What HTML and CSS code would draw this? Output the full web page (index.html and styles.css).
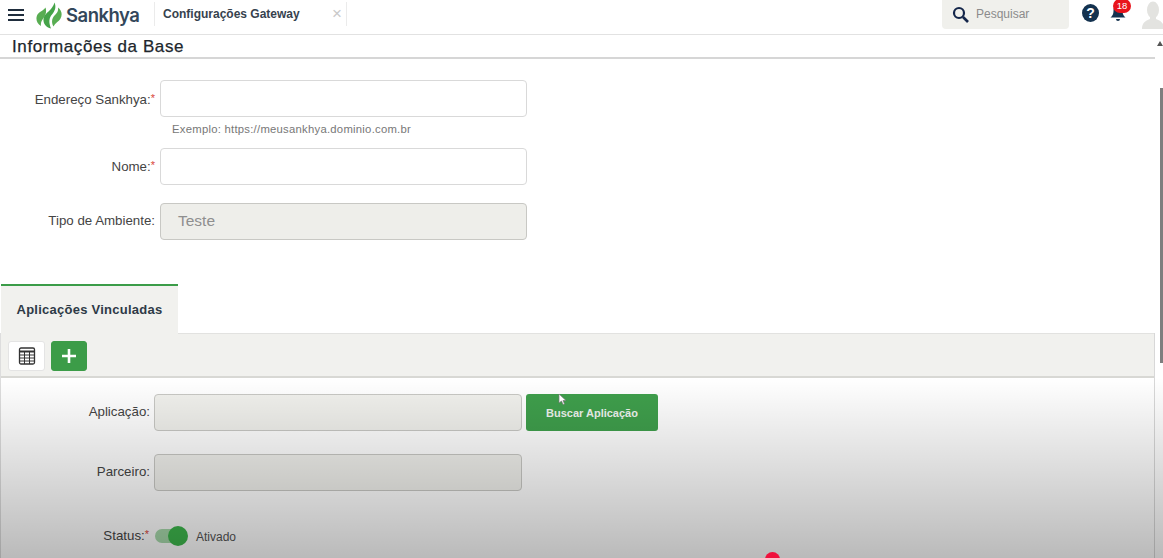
FILE: index.html
```html
<!DOCTYPE html>
<html lang="pt-BR">
<head>
<meta charset="utf-8">
<title>Configurações Gateway</title>
<link rel="stylesheet" href="styles.css">
</head>
<body>
<header class="topbar">
  <svg class="menu" width="18" height="14" viewBox="0 0 18 14"><path d="M1 2h16M1 7h16M1 12h16" stroke="#1f2d3d" stroke-width="2"/></svg>
  <svg class="logo" width="26" height="27" viewBox="0 0 26 27"><path d="M9.500 5.500C11 10 9.500 13 7.500 16C5.500 19 4.500 20.500 5 24C1 22 -0.500 17.500 1 13.500C2.500 10 7 9 9.500 5.500Z" fill="#58ad52"/><path d="M18.500 0.500C20.500 5 19 9 16 12.500C13 16 12.500 20 15 26.500C10 25.500 7 21.500 7.500 17C8 13 11 11 13.500 8.500C15.500 6.500 17.500 4 18.500 0.500Z" fill="#45a349"/><path d="M22 5.500C26 8.500 26.500 13 24.500 16.500C22.500 20 19.500 20.500 17.500 24.500C15 20.500 16 16 18.500 13.500C21 11 22.500 9.500 22 5.500Z" fill="#58ad52"/></svg>
  <span class="brand">Sankhya</span>
  <div class="tab-title">
    <span class="tab-name">Configurações Gateway</span>
    <span class="tab-close">×</span>
  </div>
  <div class="top-right">
    <div class="search">
      <svg width="17" height="17" viewBox="0 0 17 17"><circle cx="7" cy="7" r="5" fill="none" stroke="#14264a" stroke-width="2.200"/><path d="M11 11l5 5" stroke="#14264a" stroke-width="2.600"/></svg>
      <span>Pesquisar</span>
    </div>
    <span class="help">?</span>
    <div class="bell">
      <svg width="16" height="20" viewBox="0 0 16 20"><path d="M8 3C4.500 3 3.500 6 3.500 9C3.500 12 2.500 14 0.500 15.500H15.500C13.500 14 12.500 12 12.500 9C12.500 6 11.500 3 8 3Z" fill="#14324f"/><path d="M6 17h4a2 2 0 0 1-4 0Z" fill="#14324f"/></svg>
      <span class="badge">18</span>
    </div>
    <svg class="avatar" width="24" height="30" viewBox="0 0 24 30"><ellipse cx="12" cy="9" rx="6" ry="8.500" fill="#e3e3e0"/><path d="M9 15L9 18C4 20 1 22 1 28L23 28C23 22 20 20 15 18L15 15Z" fill="#e3e3e0"/></svg>
  </div>
</header>

<main class="page">
  <h1 class="page-title">Informações da Base</h1>

  <section class="form">
    <div class="row row-first">
      <label class="label">Endereço Sankhya:<em>*</em></label>
      <div class="input"></div>
    </div>
    <p class="hint">Exemplo: https://meusankhya.dominio.com.br</p>
    <div class="row row-name">
      <label class="label label-up">Nome:<em>*</em></label>
      <div class="input"></div>
    </div>
    <div class="row row-env">
      <label class="label label-up">Tipo de Ambiente:</label>
      <div class="input input-disabled">Teste</div>
    </div>
  </section>

  <div class="tabs">
    <div class="tab">Aplicações Vinculadas</div>
  </div>

  <section class="panel">
    <div class="toolbar">
      <button class="tool tool-grid" type="button">
        <svg width="18" height="18" viewBox="0 0 18 18"><rect x="1.500" y="1" width="15" height="16" rx="1.500" fill="none" stroke="#333" stroke-width="1.300"/><path d="M1.500 4.500h15" stroke="#333" stroke-width="2"/><path d="M1.500 8h15M1.500 11h15M1.500 14h15M6.500 5v12M11.500 5v12" stroke="#333" stroke-width="1"/></svg>
      </button>
      <button class="tool tool-add" type="button">
        <svg width="16" height="16" viewBox="0 0 16 16"><path d="M8 1v14M1 8h14" stroke="#fff" stroke-width="2.600"/></svg>
      </button>
    </div>
    <div class="panel-body">
      <div class="row row-app">
        <label class="label label-panel">Aplicação:</label>
        <div class="input input-disabled input-panel"></div>
        <button class="search-btn" type="button">Buscar Aplicação</button>
      </div>
      <div class="row row-partner">
        <label class="label label-panel">Parceiro:</label>
        <div class="input input-disabled input-panel"></div>
      </div>
      <div class="row row-status">
        <label class="label label-status">Status:<em>*</em></label>
        <span class="toggle"><i></i></span>
        <span class="toggle-text">Ativado</span>
      </div>
    </div>
  </section>
</main>

<div class="scrollbar">
  <span class="arrow"></span>
  <span class="thumb"></span>
</div>
<div class="shade"></div>
<svg class="pointer" width="9" height="13" viewBox="0 0 9 13"><path d="M1 1v9l2.500-2 1.500 3.500 1.500-.6L5 7.500h3Z" fill="#fff" stroke="#777" stroke-width=".7"/></svg>
<span class="click-dot"></span>
</body>
</html>
```
FILE: styles.css
```css
* { box-sizing: border-box; }
html, body { margin: 0; height: 558px; overflow: hidden; }
body { background: #fff; font-family: "Liberation Sans", Arial, sans-serif; color: #333; position: relative; }

.topbar { height: 35px; display: flex; align-items: center; border-bottom: 1px solid #e2e2e2; padding-left: 7px; background: #fff; }
.menu { flex: none; margin-top: -4px; }
.logo { flex: none; margin-left: 11px; margin-top: -4px; }
.brand { font-family: "Inter", "Liberation Sans", sans-serif; font-weight: 600; font-size: 18.500px; letter-spacing: -.5px; color: #33475b; margin-left: 4px; width: 89px; margin-top: -5px; }
.tab-title { display: flex; align-items: center; border-left: 1px solid #ebebeb; height: 24px; width: 193px; border-right: 1px solid #ebebeb; padding-left: 8px; margin-top: -7px; margin-left: -1px; }
.tab-name { font-size: 12px; font-weight: 700; color: #36424e; width: 169px; white-space: nowrap; }
.tab-close { font-size: 17px; color: #c9c9c9; }
.top-right { margin-left: auto; display: flex; align-items: flex-start; height: 34px; }
.search { width: 127px; height: 30px; background: #f0f0ec; border-radius: 0 0 4px 4px; display: flex; align-items: center; padding-left: 10px; gap: 7px; font-size: 12px; color: #8b8b8b; margin-top: -1px; }
.help { width: 17px; height: 18px; margin: 4px 0 0 13px; border-radius: 50%; background: #14324f; color: #fff; font-size: 14px; font-weight: 700; line-height: 18px; text-align: center; }
.bell { position: relative; width: 16px; margin: 2px 0 0 11px; }
.badge { position: absolute; left: 3px; top: -3px; width: 18px; height: 14px; border-radius: 7px; background: #e8141c; color: #fff; font-size: 9.500px; line-height: 14px; text-align: center; }
.avatar { margin: 1px -2px 0 15px; flex: none; }

.page-title { margin: 0 5px 0 0; height: 24px; padding-left: 12px; font-size: 17px; line-height: 23px; font-weight: 400; letter-spacing: .6px; color: #20262c; border-bottom: 2px solid #d6d6d6; -webkit-text-stroke: .25px #20262c; }

.form { height: 225px; }
.row { display: flex; align-items: center; }
.row-first { padding-top: 21px; }
.row-name { margin-top: 12px; }
.row-env { margin-top: 18px; }
.label { width: 155px; text-align: right; font-size: 13.300px; line-height: 16px; color: #444; flex: none; white-space: nowrap; }
.label-up { margin-top: -2px; }
.label em { color: #d9473a; font-style: normal; font-size: 11px; vertical-align: 2px; }
.input { width: 367px; height: 37px; margin-left: 5px; border: 1px solid #d9d9d9; border-radius: 4px; background: #fff; flex: none; }
.input-disabled { background: #eeeeea; border-color: #c8c8c4; color: #8f8f8f; font-size: 15.500px; line-height: 34px; padding-left: 17px; }
.hint { margin: 6px 0 0 172px; font-size: 11.300px; line-height: 13px; height: 13px; letter-spacing: .25px; color: #777; }

.tabs { height: 50px; display: flex; }
.tab { width: 177px; margin-left: 1px; height: 50px; background: #f1f1ee; border-top: 2px solid #3b9c48; font-size: 13px; font-weight: 700; line-height: 48px; text-align: center; letter-spacing: .25px; color: #2e3a46; }

.panel { width: 1155px; border-left: 1px solid #ddd; border-right: 1px solid #d8d8d8; height: 226px; margin-top: -1px; }
.toolbar { height: 45px; background: #f1f1ee; border-bottom: 2px solid #d8d8d4; border-top: 1px solid #e2e2e0; display: flex; align-items: flex-start; gap: 6px; padding: 7px 0 0 7px; }
.tool { width: 37px; height: 30px; padding: 0; border: 1px solid #e4e4e4; border-radius: 3px; display: flex; align-items: center; justify-content: center; background: #fff; }
.tool-add { width: 36px; background: #3c9c48; border-color: #3c9c48; }
.panel-body { background: #fff; height: 181px; }
.row-app { padding-top: 16px; }
.row-partner { margin-top: 23px; }
.row-status { margin-top: 37px; }
.label-panel { width: 149px; margin-top: -2px; }
.input-panel { width: 368px; height: 37px; margin-left: 4px; background: #f1f1ed; }
.search-btn { width: 132px; height: 37px; margin-left: 4px; border: 0; border-radius: 3px; background: #3f9f4c; color: #eef3ee; font: 700 11px "Liberation Sans", Arial, sans-serif; }
.label-status { width: 148px; margin-top: -2px; }
.toggle { position: relative; width: 30px; height: 14px; margin-left: 6px; border-radius: 7px; background: #a7d9ab; flex: none; }
.toggle i { position: absolute; right: -3px; top: -3px; width: 20px; height: 20px; border-radius: 50%; background: #3eb84d; }
.toggle-text { font-size: 12px; color: #555; margin-left: 11px; margin-top: 2px; }

.scrollbar { position: absolute; right: 0; top: 35px; bottom: 0; width: 8px; background: #fff; }
.arrow { position: absolute; right: 0; top: 6px; border: 3px solid transparent; border-top-width: 0; border-bottom: 5px solid #555; }
.thumb { position: absolute; right: 0; top: 53px; width: 3px; height: 275px; background: #7e7e7e; }

.shade { position: absolute; left: 0; right: 0; bottom: 0; height: 180px; background: linear-gradient(rgba(0,0,0,0), rgba(0,0,0,.27)); pointer-events: none; }
.pointer { position: absolute; left: 558px; top: 393px; }
.click-dot { position: absolute; left: 765px; top: 552px; width: 15px; height: 15px; border-radius: 50%; background: #f0103c; }
```
